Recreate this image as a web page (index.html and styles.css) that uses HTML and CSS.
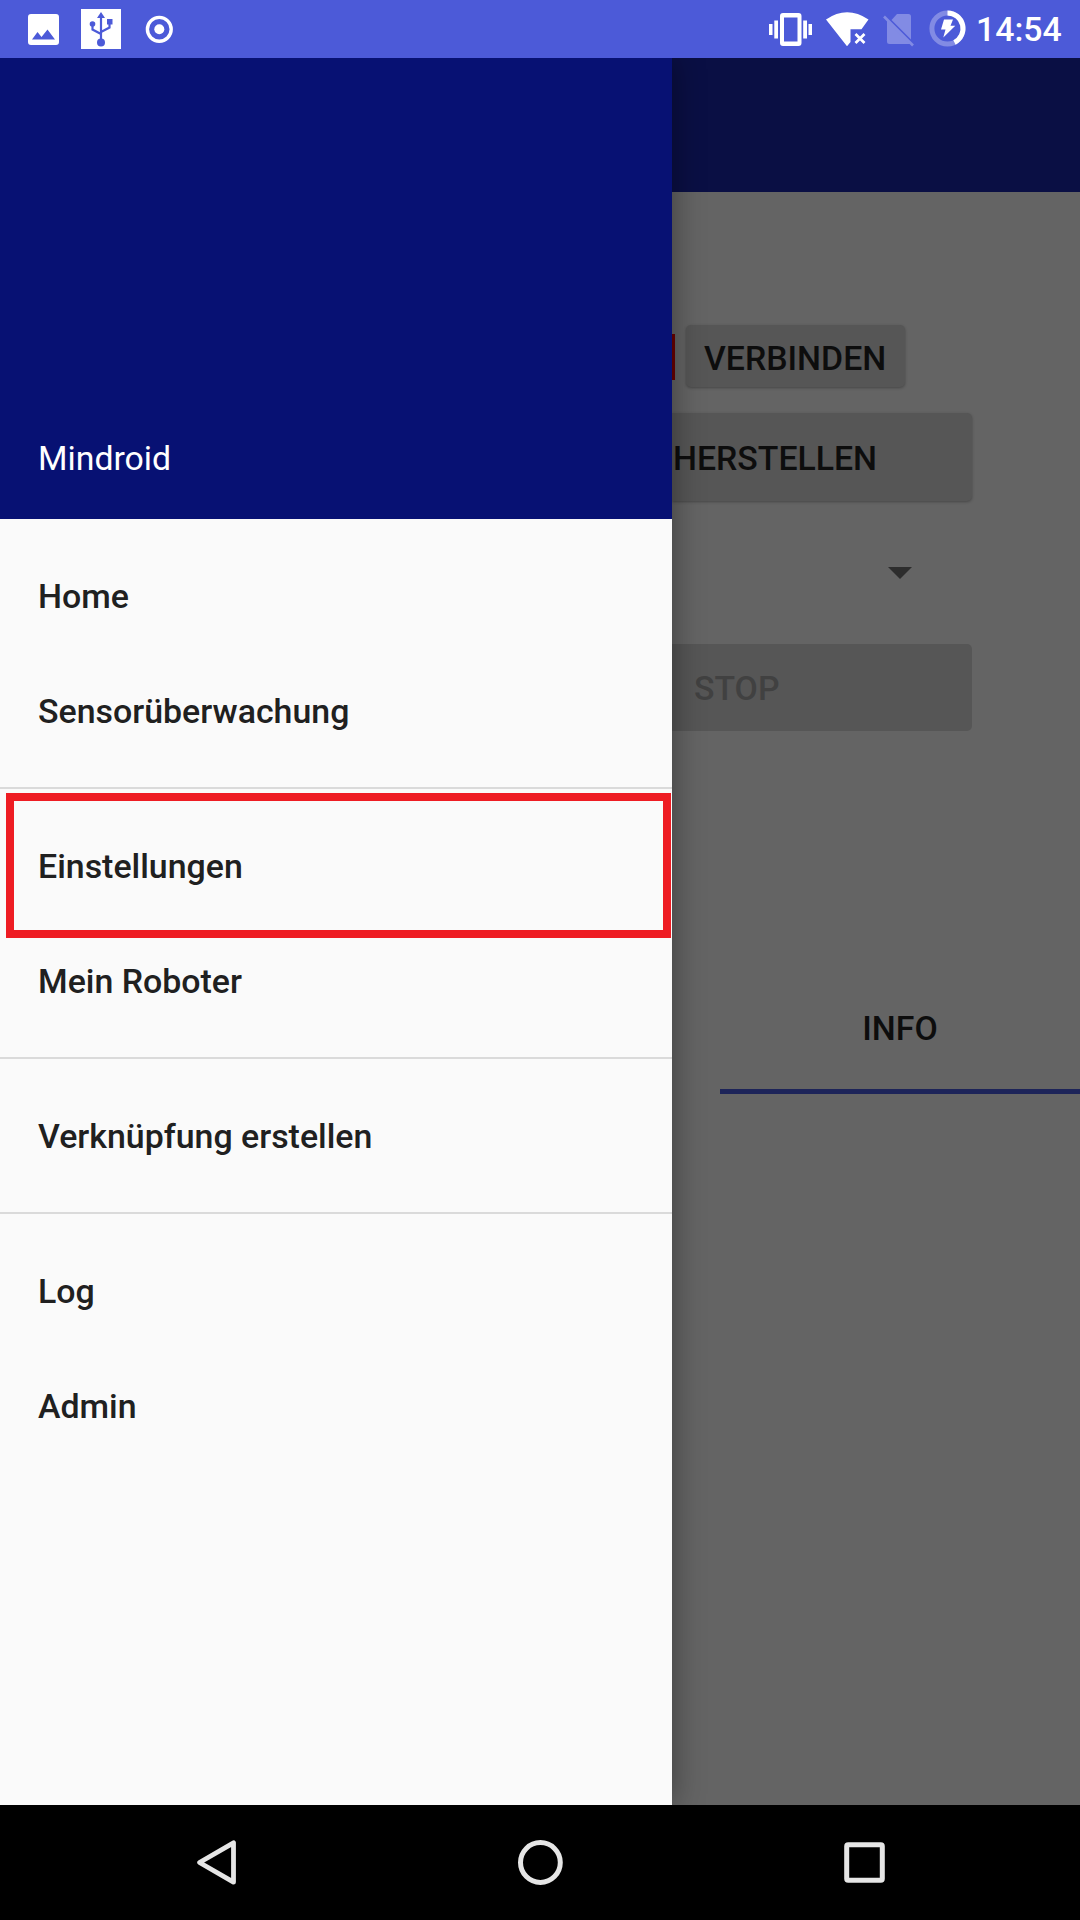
FILE: index.html
```html
<!DOCTYPE html>
<html lang="de">
<head>
<meta charset="utf-8">
<title>Mindroid</title>
<link rel="stylesheet" href="styles.css">
</head>
<body>
<div class="phone">
  <header class="status">
    <svg class="status-icons" width="200" height="58" viewBox="0 0 200 58">
      <path fill="#fff" fill-rule="evenodd" d="M31 14H56Q59 14 59 17V42Q59 45 56 45H31Q28 45 28 42V17Q28 14 31 14ZM32 39.500H55L47.500 29.500L41.500 37L37.500 32Z"/>
      <path fill="#fff" d="M81 9H121V49H81Z"/>
      <g stroke="#4c5ad8" stroke-width="2.200" fill="none"><path d="M101 43V15M101 34L92.500 29.500V24M101 32L109.500 27.500V22"/></g>
      <g fill="#4c5ad8"><path d="M101 12L105 18H97Z"/><circle cx="101" cy="42.500" r="4"/><circle cx="92.500" cy="24" r="2.800"/><path d="M107 19H112.500V24.500H107Z"/></g>
      <circle cx="159.300" cy="29.300" r="11.900" fill="none" stroke="#fff" stroke-width="3.400"/>
      <circle cx="159.300" cy="29.300" r="5" fill="#fff"/>
    </svg>
    <svg class="status-icons" width="210" height="58" viewBox="760 0 210 58">
      <path fill="#fff" fill-rule="evenodd" d="M783 13H798.500Q801.500 13 801.500 16V43Q801.500 46 798.500 46H783Q780 46 780 43V16Q780 13 783 13ZM784 17.500V41.500H797.500V17.500Z"/>
      <path fill="#fff" d="M769 24H772.500V35H769ZM774.300 20.500H778V38.500H774.300ZM803.200 20.500H807V38.500H803.200ZM808.500 24H812V35H808.500Z"/>
      <path fill="#fff" d="M826 19.500Q847 5 868.500 19.500L861.500 29.200H850.500V42L847 46.300Z"/>
      <path d="M855.500 34L864.500 43M864.500 34L855.500 43" stroke="#fff" stroke-width="2.700"/>
      <path fill="#828be4" d="M897 14H908.500Q911 14 911 16.500V39.500L891.500 20ZM887 19.500L911 43.500Q910 44 908 44H889.500Q887 44 887 41.500Z"/>
      <path d="M884 16.500L913 45.500" stroke="#828be4" stroke-width="2.600"/>
      <circle cx="947.500" cy="28.500" r="15.600" fill="none" stroke="#828be4" stroke-width="5"/>
      <path d="M947.500 12.900A15.600 15.600 0 0 1 954.500 42.400" fill="none" stroke="#fff" stroke-width="5"/>
      <path fill="#fff" d="M944 19.500H953L950.500 25.800H955.300L943.300 37.500L945.500 29.500H941Z"/>
    </svg>
    <time class="clock">14:54</time>
  </header>

  <div class="app">
    <main class="screen">
      <div class="appbar"></div>
      <div class="connect-row">
        <span class="field-edge"></span>
        <button class="button connect">VERBINDEN</button>
      </div>
      <button class="button establish">HERSTELLEN</button>
      <div class="spinner"><svg width="24" height="12" viewBox="0 0 24 12"><path fill="#2d2d2d" d="M0 0H24L12 12Z"/></svg></div>
      <button class="button stop">STOP</button>
      <div class="tab">INFO</div>
    </main>

    <nav class="drawer">
      <div class="drawer-header">Mindroid</div>
      <ul class="group"><li>Home</li><li>Sensorüberwachung</li></ul>
      <ul class="group"><li class="highlight">Einstellungen</li><li>Mein Roboter</li></ul>
      <ul class="group"><li>Verknüpfung erstellen</li></ul>
      <ul class="group"><li>Log</li><li>Admin</li></ul>
    </nav>
  </div>

  <footer class="navbar">
    <svg width="48" height="48" viewBox="192 1838 48 48"><path d="M233.500 1842.800V1882.200L199.500 1862.500Z" fill="none" stroke="#e6e6e6" stroke-width="4.800" stroke-linejoin="round"/></svg>
    <svg width="48" height="48" viewBox="516 1838 48 48"><circle cx="540.400" cy="1862.500" r="19.900" fill="none" stroke="#e6e6e6" stroke-width="5"/></svg>
    <svg width="48" height="48" viewBox="840 1838 48 48"><rect x="846.700" y="1844.700" width="35.600" height="35.600" rx="1.500" fill="none" stroke="#e6e6e6" stroke-width="5"/></svg>
  </footer>
</div>
</body>
</html>
```
FILE: styles.css
```css
* { box-sizing: border-box; }
body { margin: 0; font-family: Roboto, sans-serif; font-size: 33.8px; }
.phone { width: 1080px; height: 1920px; display: flex; flex-direction: column; overflow: hidden; }

.status { height: 58px; flex: none; display: flex; align-items: center; background: #4c5ad8; }
.status-icons { display: block; flex: none; }
.status-icons + .status-icons { margin-left: 560px; }
.clock { margin-left: 6px; line-height: 58px; padding-top: 2px; font-size: 33.8px; font-weight: 500; color: #fff; }

.app { flex: 1; display: grid; grid-template-columns: 672px 408px; background: #646464; overflow: hidden; }
.drawer, .screen { grid-row: 1; min-width: 0; }
.drawer { grid-column: 1; z-index: 1; background: #fafafa; color: #202020; font-size: 33.9px; font-weight: 500; box-shadow: 0 0 30px rgba(0, 0, 0, .4); }
.drawer-header { height: 461px; padding: 381px 38px 0; line-height: 40px; font-size: 33.8px; font-weight: 400; background: #071173; color: #fff; }
.group { list-style: none; margin: 0; padding: 19px 0; }
.group + .group { border-top: 2px solid #dadada; }
.group li { height: 115px; padding: 0 38px; line-height: 117px; }
.group .highlight { width: 665px; height: 145px; margin: -15px 0 -15px 6px; padding: 0 24px; border: 8px solid #ee1c23; line-height: 131px; }

.screen { grid-column: 2; display: flex; flex-direction: column; align-items: flex-start; color: #0d0d0d; font-weight: 500; }
.appbar { align-self: stretch; height: 134px; flex: none; background: #0a0f44; }
.connect-row { display: flex; align-items: center; margin-top: 132px; height: 63px; }
.field-edge { width: 3px; height: 46px; margin: 2px 11px 0 0; background: #6b0000; }
.button { border: 0; padding: 0; background: #565656; color: inherit; font: inherit; text-align: left; border-radius: 5px; box-shadow: 0 1px 3px rgba(0, 0, 0, .3); }
.connect { width: 219px; height: 62px; padding: 5px 0 0 18px; }
.establish { width: 300px; height: 88px; margin-top: 26px; padding: 2px 0 0 1px; border-radius: 0 5px 5px 0; }
.spinner { height: 12px; margin: 66px 0 65px 216px; display: flex; }
.stop { width: 300px; height: 87px; padding: 2px 0 0 22px; border-radius: 0 5px 5px 0; box-shadow: none; color: #414141; }
.tab { align-self: stretch; height: 133px; margin: 230px 0 0 48px; border-bottom: 5px solid #1d2459; text-align: center; line-height: 135px; }

.navbar { height: 115px; flex: none; display: flex; justify-content: center; align-items: center; gap: 276px; padding-bottom: 1px; background: #000; }
```
